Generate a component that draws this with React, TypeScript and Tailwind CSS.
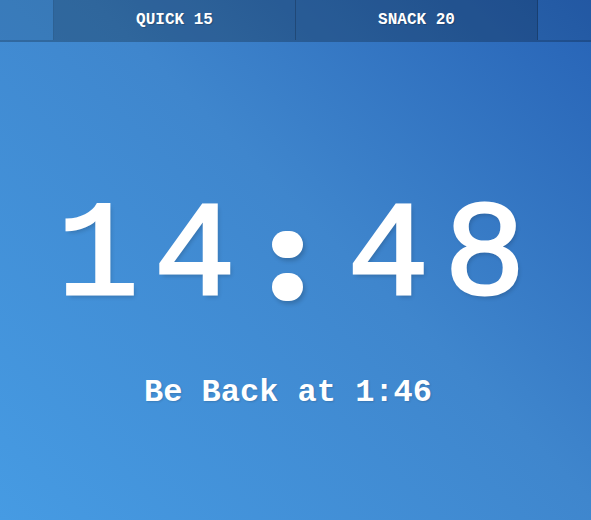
import React from 'react';

const mono = { fontFamily: '"Liberation Mono", "Courier New", monospace' };

const Tab: React.FC<{ label: string }> = ({ label }) => (
  <button className="w-[242px] h-full flex items-center justify-center bg-black/15 border-r border-black/20 text-white font-bold text-[16px] tracking-normal [text-shadow:1px_1px_1px_rgba(0,0,0,0.2)]">
    {label}
  </button>
);

// round colon dots, the font's own colon is square
const Colon: React.FC = () => (
  <span className="w-[97px] pr-[23px] flex flex-col items-center">
    <span className="mt-[41px] w-[31px] h-[27px] rounded-full bg-white shadow-[2px_3px_4px_rgba(0,0,0,0.18)]" />
    <span className="mt-[15px] w-[31px] h-[28px] rounded-full bg-white shadow-[2px_3px_4px_rgba(0,0,0,0.18)]" />
  </span>
);

const App: React.FC = () => {
  return (
    <div
      className="w-full min-h-[520px] h-screen flex flex-col bg-[linear-gradient(45deg,#469be3_0%,#3f86cd_55%,#2763b6_100%)] text-white"
      style={mono}
    >
      <nav className="h-[42px] flex justify-center bg-black/10 border-b-2 border-black/15">
        <div className="h-full flex border-l border-black/20">
          <Tab label="QUICK 15" />
          <Tab label="SNACK 20" />
        </div>
      </nav>

      <main className="flex flex-col items-center pt-[148px]">
        <div className="flex h-[136px] pl-[7px] text-[136px] leading-none font-normal tracking-[15px] [-webkit-text-stroke:3px_white] [text-shadow:2px_3px_4px_rgba(0,0,0,0.18)]">
          <span>14</span>
          <Colon />
          <span>48</span>
        </div>
        <div className="mt-[51px] pr-[15px] text-[32px] leading-none font-bold [text-shadow:1px_1px_2px_rgba(0,0,0,0.15)]">
          Be Back at 1:46
        </div>
      </main>
    </div>
  );
};

export default App;
